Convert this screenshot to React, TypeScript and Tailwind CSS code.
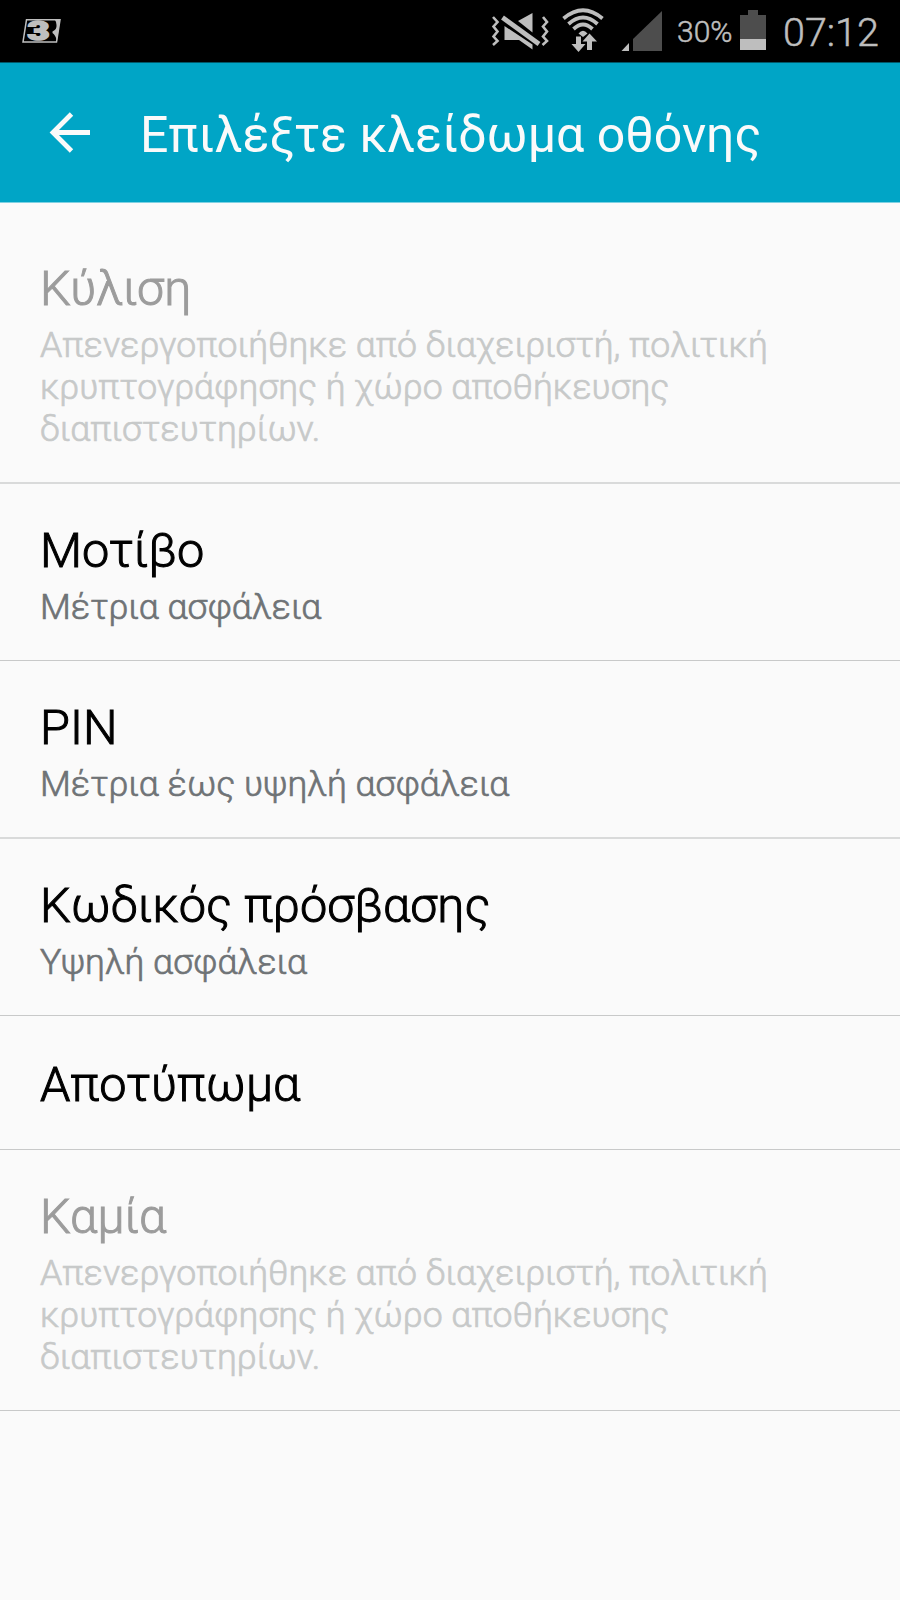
interface LockOption {
  title: string
  summary?: string
  disabled?: boolean
  // rule under the row; rules that fall between two device pixels are softer
  rule: string
  box: string
}

const DISABLED_SUMMARY =
  'Απενεργοποιήθηκε από διαχειριστή, πολιτική κρυπτογράφησης ή χώρο αποθήκευσης διαπιστευτηρίων.'

const options: LockOption[] = [
  { title: 'Κύλιση', summary: DISABLED_SUMMARY, disabled: true, box: 'h-[262px] pt-[38px]', rule: 'border-b-2 border-[#d9dada]' },
  { title: 'Μοτίβο', summary: 'Μέτρια ασφάλεια', box: 'h-[177px] pt-[38px]', rule: 'border-b border-[#c8c9c9]' },
  { title: 'PIN', summary: 'Μέτρια έως υψηλή ασφάλεια', box: 'h-[178px] pt-[38px]', rule: 'border-b-2 border-[#d9dada]' },
  { title: 'Κωδικός πρόσβασης', summary: 'Υψηλή ασφάλεια', box: 'h-[177px] pt-[38px]', rule: 'border-b border-[#c8c9c9]' },
  { title: 'Αποτύπωμα', box: 'h-[134px] pt-[40px]', rule: 'border-b border-[#c8c9c9]' },
  { title: 'Καμία', summary: DISABLED_SUMMARY, disabled: true, box: 'h-[261px] pt-[38px]', rule: 'border-b border-[#c8c9c9]' },
]

function CarrierLogo() {
  return (
    <svg width="40" height="36" viewBox="0 -6 40 36" className="ml-[22px] mt-[-1px]">
      <path d="M4.500 0.800H38L34.500 23H1Z" fill="#000" stroke="#bebebe" strokeWidth="1.500" />
      <path d="M38 1L35 22Q33.500 16 30.500 14V12.500Q35 10.500 34.500 6Q34.500 3 33 1Z" fill="#bebebe" />
      <text
        x="5.500"
        y="20.500"
        fill="#bebebe"
        stroke="#bebebe"
        strokeWidth="1.600"
        fontSize="25"
        fontWeight="900"
        textLength="22"
        lengthAdjust="spacingAndGlyphs"
        className="font-['Roboto']"
      >
        3
      </text>
    </svg>
  )
}

function MuteVibrateIcon() {
  return (
    <svg width="60" height="40" viewBox="0 0 60 40" fill="#bebebe">
      <path d="M3 6L7.500 11L3.500 15.500L7.500 20.500L3.500 25.500L7.500 30L3 34" fill="none" stroke="#bebebe" strokeWidth="2.600" />
      <path d="M53 6L57 11L53 15.500L57 20.500L53 25.500L57 30L52.500 34" fill="none" stroke="#bebebe" strokeWidth="2.600" />
      <path d="M28 10L42.500 2V21.500Z" />
      <path d="M14.500 15L42.500 33.500V38.500L29 29H14.500Z" />
      <path d="M12.500 6L49 33" stroke="#000" strokeWidth="7" />
      <path d="M12.500 6.500L49 33" stroke="#bebebe" strokeWidth="4.800" />
    </svg>
  )
}

function WifiIcon() {
  return (
    <svg width="44" height="48" viewBox="0 0 44 48" fill="none" stroke="#bebebe" strokeWidth="3.800">
      <path d="M2.500 12.500Q22 -4 41.500 12.500" />
      <path d="M7.500 18Q22 5 36.500 18" />
      <path d="M12.500 23Q22 14 31.500 23" />
      <path d="M17.500 27.500Q22 22 26.500 27.500L22 31Z" fill="#bebebe" stroke="none" />
      <path d="M15 30.500H20V38H24.500L17.500 46L10.500 38H15Z" fill="#bebebe" stroke="none" />
      <path d="M26 44H31V35.500H36L28.500 27.500L21.500 35.500H26Z" fill="#bebebe" stroke="none" />
    </svg>
  )
}

function SignalIcon() {
  return (
    <svg width="42" height="42" viewBox="0 0 42 42">
      <path d="M12 41V29L41 1V41Z" fill="#4d4d4d" />
      <path d="M0.500 41L8 33V41Z" fill="#bebebe" />
    </svg>
  )
}

function StatusBar() {
  return (
    <div className="h-[62px] bg-black text-[#bebebe] flex items-center">
      <CarrierLogo />
      <div className="flex-1" />
      <div className="mt-[-1px]">
        <MuteVibrateIcon />
      </div>
      <div className="ml-[11px] mt-[-3px]">
        <WifiIcon />
      </div>
      <div className="ml-[16px]">
        <SignalIcon />
      </div>
      <span className="ml-[14px] mt-[2px] w-[58px] text-[30px] font-light [-webkit-text-stroke:0.5px] leading-none whitespace-nowrap">30%</span>
      <div className="ml-[5px] mt-[-2px] flex flex-col items-center">
        <div className="w-[10px] h-[5px] bg-[#4d4d4d]" />
        <div className="w-[26px] h-[24px] bg-[#4d4d4d]" />
        <div className="w-[26px] h-[11px] bg-[#bebebe]" />
      </div>
      <span className="ml-[17px] mt-[4px] w-[117px] text-[39.500px] font-light [-webkit-text-stroke:0.5px] leading-none whitespace-nowrap">07:12</span>
    </div>
  )
}

function Header() {
  return (
    <header className="h-[141px] bg-[#00a5c6] border-t border-t-[#015768] border-b border-b-[#7fd1e2] flex items-center text-[#fafafa]">
      <svg width="42" height="42" viewBox="0 0 42 42" className="ml-[49px]" fill="none" stroke="#fafafa" strokeWidth="4.800">
        <path d="M41 20.500H5M22.500 2L4 20.500L22.500 39" />
      </svg>
      <h1 className="ml-[49px] mt-[4px] text-[50px] leading-[60px] whitespace-nowrap">Επιλέξτε κλείδωμα οθόνης</h1>
    </header>
  )
}

function OptionRow({ title, summary, disabled, rule, box }: LockOption) {
  return (
    <li className={`${box} ${rule} pl-[40px]`}>
      <h2 className={`text-[48.600px] leading-[58px] font-light [-webkit-text-stroke:1px] ${disabled ? 'text-[#9c9c9c]' : 'text-black'}`}>
        {title}
      </h2>
      {summary && (
        <p
          className={`mt-[6px] w-[760px] text-[35.650px] leading-[42px] font-light [-webkit-text-stroke:0.7px] ${
            disabled ? 'text-[#c7c9c9]' : 'text-[#6f7376]'
          }`}
        >
          {summary}
        </p>
      )}
    </li>
  )
}

export default function App() {
  return (
    <div className="w-[900px] h-[1600px] bg-[#fafafa] font-['Roboto',sans-serif] overflow-hidden">
      <StatusBar />
      <Header />
      <ul className="pt-[19px]">
        {options.map((option) => (
          <OptionRow key={option.title} {...option} />
        ))}
      </ul>
    </div>
  )
}
